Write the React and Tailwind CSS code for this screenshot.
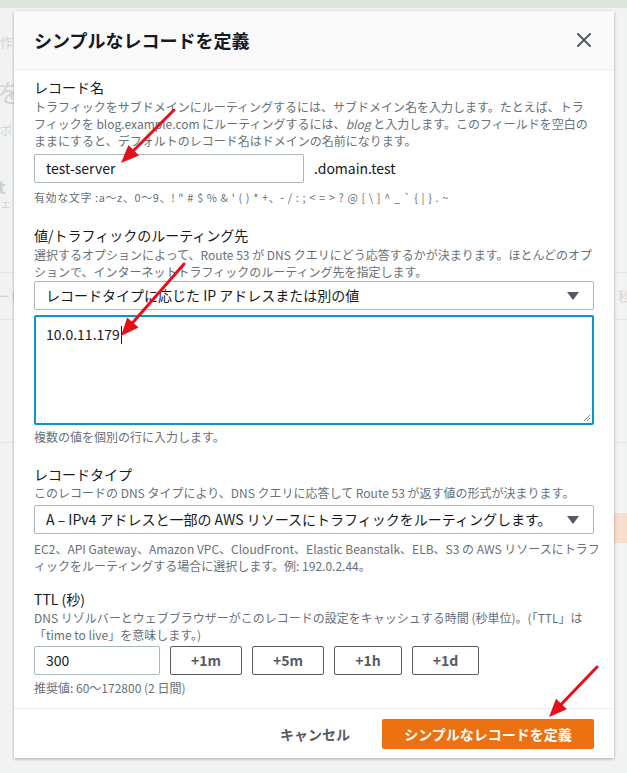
import React from "react";

const JP = { fontFamily: "'Noto Sans CJK JP', 'Noto Sans', sans-serif" };

function Arrow({ x1, y1, x2, y2 }) {
  // red annotation arrow, tip at (x2, y2)
  const dx = x2 - x1;
  const dy = y2 - y1;
  const len = Math.sqrt(dx * dx + dy * dy);
  const ux = dx / len;
  const uy = dy / len;
  const hl = 18;
  const hw = 7.5;
  const bx = x2 - ux * hl;
  const by = y2 - uy * hl;
  const p1 = `${bx - uy * hw},${by + ux * hw}`;
  const p2 = `${bx + uy * hw},${by - ux * hw}`;
  return (
    <g>
      <line x1={x1} y1={y1} x2={bx + ux * 2} y2={by + uy * 2} stroke="#e3101a" strokeWidth="3" strokeLinecap="round" />
      <polygon points={`${x2},${y2} ${p1} ${p2}`} fill="#e3101a" />
    </g>
  );
}

function Caret() {
  return (
    <svg width="12" height="8" viewBox="0 0 12 8" className="shrink-0">
      <path d="M0 0 L12 0 L6 8 Z" fill="#545b64" />
    </svg>
  );
}

function Label({ children, className = "" }) {
  return <div className={`text-[14px] leading-[20px] text-[#16191f] ${className}`}>{children}</div>;
}

function Desc({ lines, className = "" }) {
  return (
    <div className={`text-[12px] leading-[17px] text-[#687078] ${className}`}>
      {lines.map((l, i) => (
        <div key={i} className="whitespace-nowrap">
          {l}
        </div>
      ))}
    </div>
  );
}

function Select({ text, className = "" }) {
  return (
    <div
      className={`flex h-[29px] items-center justify-between rounded-[2px] border border-[#aab7b8] bg-white pl-[11px] pr-[14px] text-[14px] text-[#16191f] ${className}`}
    >
      <span className="whitespace-nowrap">{text}</span>
      <Caret />
    </div>
  );
}

const ttlButtons = [
  { label: "+1m", w: "w-[72px]" },
  { label: "+5m", w: "w-[72px]" },
  { label: "+1h", w: "w-[68px]" },
  { label: "+1d", w: "w-[67px]" },
];

export default function App() {
  return (
    <div className="relative h-[773px] w-[627px] overflow-hidden bg-[#f1f2f2]" style={JP}>
      {/* dimmed page behind the modal */}
      <div className="h-[8px] bg-[#dbe6dc]" />
      <div className="flex flex-col text-[#d3d6d6]">
        <div className="h-[24px]" />
        <div className="flex h-[20px] items-center text-[13px]">
          <span>作</span>
        </div>
        <div className="h-[25px]" />
        <div className="flex h-[30px] items-center text-[26px] leading-none">
          <span className="ml-[-3px]">を</span>
        </div>
        <div className="h-[14px]" />
        <div className="flex h-[18px] items-center text-[12px]">
          <span>ポ</span>
        </div>
        <div className="h-[37px]" />
        <div className="flex h-[20px] items-center text-[18px] font-bold leading-none">
          <span className="ml-[-2px] text-[#cdd0d0]">t</span>
        </div>
        <div className="flex h-[15px] items-center text-[11px] leading-none">
          <span>ェ</span>
        </div>
        <div className="h-[62px] border-b border-[#e4e6e6]" />
        <div className="flex h-[47px] items-center justify-between border-b border-[#e4e6e6] text-[13px]">
          <span className="ml-[-4px]">ード</span>
          <span className="mr-[-4px]">秒</span>
        </div>
        <div className="h-[123px] border-b border-[#e4e6e6]" />
        <div className="h-[70px]" />
        <div className="flex h-[30px] justify-end">
          <div className="w-[13px] bg-[#f6ddcc]" />
        </div>
      </div>

      {/* modal */}
      <div className="absolute left-[14px] top-[11px] w-[600px] bg-white shadow-[0_1px_3px_rgba(0,0,0,0.3)]">
        <div className="flex h-[59px] items-center justify-between border-b border-[#eaeded] bg-[#fafafa] pl-[20px] pr-[23px]">
          <h2 className="text-[18px] font-bold text-[#16191f]">シンプルなレコードを定義</h2>
          <svg width="14" height="14" viewBox="0 0 14 14">
            <path d="M1 1 L13 13 M13 1 L1 13" stroke="#545b64" strokeWidth="2" strokeLinecap="square" />
          </svg>
        </div>

        <div className="px-[20px] pb-[12px] pt-[7px]">
          <Label>レコード名</Label>
          <Desc
            className="mt-[1px]"
            lines={[
              "トラフィックをサブドメインにルーティングするには、サブドメイン名を入力します。たとえば、トラ",
              <>
                フィックを blog.example.com にルーティングするには、<i>blog</i> と入力します。このフィールドを空白の
              </>,
              "ままにすると、デフォルトのレコード名はドメインの名前になります。",
            ]}
          />
          <div className="mt-[5px] flex items-center">
            <div className="flex h-[29px] w-[270px] items-center rounded-[2px] border border-[#aab7b8] pl-[11px] text-[14px] text-[#16191f]">
              test-server
            </div>
            <span className="ml-[10px] text-[14px] text-[#16191f]">.domain.test</span>
          </div>
          <div className="mt-[6px] whitespace-nowrap text-[11px] leading-[16px] tracking-[0.6px] text-[#687078]">
            有効な文字 :a〜z、0〜9、! " # $ % &amp; ' ( ) * +、- / : ; &lt; = &gt; ? @ [ \ ] ^ _ ` {"{"} | {"}"} . ~
          </div>

          <Label className="mt-[20px]">値/トラフィックのルーティング先</Label>
          <Desc
            className="mt-[1px]"
            lines={[
              "選択するオプションによって、Route 53 が DNS クエリにどう応答するかが決まります。ほとんどのオプ",
              "ションで、インターネットトラフィックのルーティング先を指定します。",
            ]}
          />
          <Select className="mt-[1px]" text="レコードタイプに応じた IP アドレスまたは別の値" />
          <div className="relative mt-[5px] h-[110px] rounded-[2px] border-2 border-[#0a97c4] pl-[10px] pt-[5px] text-[14px] leading-[20px] text-[#16191f]">
            10.0.11.179
            <span className="ml-[1px] inline-block h-[18px] w-[1px] translate-y-[4px] bg-[#16191f]" />
            <svg className="absolute bottom-[1px] right-[1px]" width="9" height="9" viewBox="0 0 9 9">
              <path d="M8 2 L2 8 M8 5 L5 8" stroke="#7d8384" strokeWidth="1" />
            </svg>
          </div>
          <div className="mt-[4px] text-[12px] leading-[16px] text-[#687078]">複数の値を個別の行に入力します。</div>

          <Label className="mt-[19px]">レコードタイプ</Label>
          <Desc lines={["このレコードの DNS タイプにより、DNS クエリに応答して Route 53 が返す値の形式が決まります。"]} />
          <Select className="mt-[4px]" text="A – IPv4 アドレスと一部の AWS リソースにトラフィックをルーティングします。" />
          <Desc
            className="mt-[6px]"
            lines={[
              "EC2、API Gateway、Amazon VPC、CloudFront、Elastic Beanstalk、ELB、S3 の AWS リソースにトラフ",
              "ィックをルーティングする場合に選択します。例: 192.0.2.44。",
            ]}
          />

          <Label className="mt-[15px]">TTL (秒)</Label>
          <Desc
            lines={[
              "DNS リゾルバーとウェブブラウザーがこのレコードの設定をキャッシュする時間 (秒単位)。(「TTL」は",
              "「time to live」を意味します。)",
            ]}
          />
          <div className="mt-[3px] flex gap-[10px]">
            <div className="flex h-[29px] w-[126px] items-center rounded-[2px] border border-[#aab7b8] pl-[11px] text-[14px] text-[#16191f]">
              300
            </div>
            {ttlButtons.map((b) => (
              <button
                key={b.label}
                className={`h-[29px] ${b.w} rounded-[2px] border border-[#545b64] bg-white text-[14px] font-bold text-[#545b64]`}
              >
                {b.label}
              </button>
            ))}
          </div>
          <div className="mt-[5px] text-[12px] leading-[16px] text-[#687078]">推奨値: 60〜172800 (2 日間)</div>
        </div>

        <div className="flex items-center justify-end gap-[12px] border-t border-[#eaeded] pb-[9px] pl-[20px] pr-[20px] pt-[10px]">
          <button className="h-[30px] px-[20px] text-[14px] font-bold text-[#545b64]">キャンセル</button>
          <button className="h-[30px] w-[212px] rounded-[2px] bg-[#ec7211] text-[14px] font-bold text-white">
            シンプルなレコードを定義
          </button>
        </div>
      </div>

      {/* annotation arrows */}
      <svg className="pointer-events-none absolute left-0 top-0" width="627" height="773">
        <Arrow x1={174} y1={110} x2={121} y2={163} />
        <Arrow x1={184} y1={264} x2={121} y2={336} />
        <Arrow x1={597} y1={667} x2={549} y2={717} />
      </svg>
    </div>
  );
}
